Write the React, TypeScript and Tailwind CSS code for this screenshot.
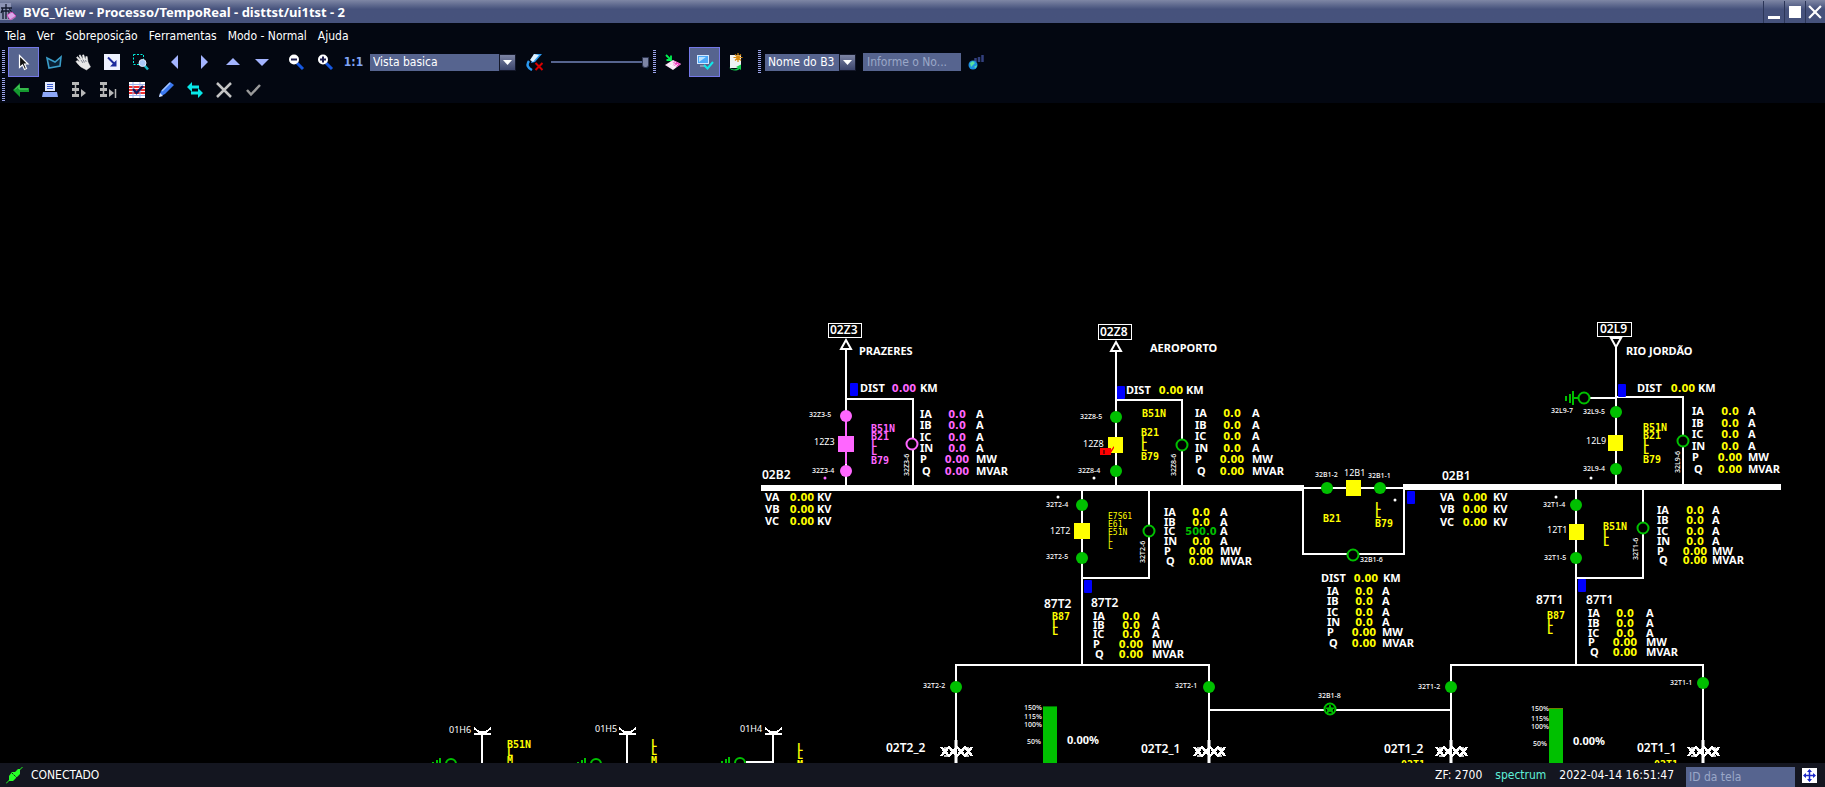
import React from "react";

const W = "#ffffff";
const G = "#00c000";
const Y = "#ffff00";
const P = "#ff66ff";
const B = "#0000ff";

/* ---------- diagram text ---------- */

type TProps = { x: number; y: number; c?: string; children: React.ReactNode };

const Label = ({ x, y, c = W, children }: TProps) => (
  <text x={x} y={y} fill={c} className="font-['Noto_Sans',sans-serif] text-[11px] font-bold">
    {children}
  </text>
);
const Value = ({ x, y, c = Y, children }: TProps) => (
  <text
    x={x}
    y={y}
    fill={c}
    textAnchor="middle"
    className="font-['DejaVu_Sans_Condensed','DejaVu_Sans',sans-serif] text-[11px] font-bold"
  >
    {children}
  </text>
);
const Tag = ({ x, y, c = W, children }: TProps) => (
  <text x={x} y={y} fill={c} className="font-['Noto_Sans',sans-serif] text-[12px] font-semibold">
    {children}
  </text>
);
const Relay = ({ x, y, c = Y, children }: TProps) => (
  <text x={x} y={y} fill={c} className="font-['DejaVu_Sans_Mono',monospace] text-[10px] font-bold">
    {children}
  </text>
);
const RelayThin = ({ x, y, c = Y, children }: TProps) => (
  <text x={x} y={y} fill={c} className="font-['DejaVu_Sans_Mono',monospace] text-[8px]">
    {children}
  </text>
);
const Small = ({ x, y, c = W, children }: TProps) => (
  <text x={x} y={y} fill={c} className="font-['Noto_Sans',sans-serif] text-[7px] font-medium">
    {children}
  </text>
);
const Mid = ({ x, y, c = W, children }: TProps) => (
  <text x={x} y={y} fill={c} className="font-['Noto_Sans',sans-serif] text-[9px]">
    {children}
  </text>
);
const Upright = ({ x, y, children }: TProps) => (
  <text
    transform={`translate(${x} ${y}) rotate(-90)`}
    fill={W}
    className="font-['Noto_Sans',sans-serif] text-[7px] font-medium"
  >
    {children}
  </text>
);

/* ---------- diagram symbols ---------- */

const Line = ({ d, c = W, w = 2 }: { d: string; c?: string; w?: number }) => (
  <path d={d} stroke={c} strokeWidth={w} fill="none" shapeRendering="crispEdges" />
);
const Dot = ({ x, y, c = G }: { x: number; y: number; c?: string }) => <circle cx={x} cy={y} r={6} fill={c} />;
const Open = ({ x, y, c = G }: { x: number; y: number; c?: string }) => (
  <circle cx={x} cy={y} r={5.5} fill="#000" stroke={c} strokeWidth={2} />
);
const Breaker = ({ x, y, c = Y, w = 15 }: { x: number; y: number; c?: string; w?: number }) => (
  <rect x={x} y={y} width={w} height={16} fill={c} />
);
const Flag = ({ x, y }: { x: number; y: number }) => <rect x={x} y={y} width={8} height={13} rx={1} fill={B} />;
const Point = ({ x, y, c = W }: { x: number; y: number; c?: string }) => <circle cx={x} cy={y} r={1.5} fill={c} />;

type Row = [name: string, y: number, value: string, color?: string];
const Readings = ({
  lx,
  vx,
  ux,
  c = Y,
  rows,
}: {
  lx: number;
  vx: number;
  ux: number;
  c?: string;
  rows: Row[];
}) => (
  <g>
    {rows.map(([name, y, value, color]) => (
      <g key={name}>
        <Label x={name === "Q" ? lx + 2 : lx} y={y}>
          {name}
        </Label>
        <Value x={vx} y={y} c={color ?? c}>
          {value}
        </Value>
        <Label x={ux} y={y}>
          {name === "P" ? "MW" : name === "Q" ? "MVAR" : "A"}
        </Label>
      </g>
    ))}
  </g>
);

const six = (ys: number[], ic?: [string, string]): Row[] => [
  ["IA", ys[0], "0.0"],
  ["IB", ys[1], "0.0"],
  ic ? ["IC", ys[2], ic[0], ic[1]] : ["IC", ys[2], "0.0"],
  ["IN", ys[3], "0.0"],
  ["P", ys[4], "0.00"],
  ["Q", ys[5], "0.00"],
];
const five = (ys: number[]): Row[] => [
  ["IA", ys[0], "0.0"],
  ["IB", ys[1], "0.0"],
  ["IC", ys[2], "0.0"],
  ["P", ys[3], "0.00"],
  ["Q", ys[4], "0.00"],
];

const Voltages = ({ x, vx, ux, ys }: { x: number; vx: number; ux: number; ys: number[] }) => (
  <g>
    {["VA", "VB", "VC"].map((n, i) => (
      <g key={n}>
        <Label x={x} y={ys[i]}>
          {n}
        </Label>
        <Value x={vx} y={ys[i]}>
          0.00
        </Value>
        <Label x={ux} y={ys[i]}>
          KV
        </Label>
      </g>
    ))}
  </g>
);

const Distance = ({ x, vx, ux, y, c = Y }: { x: number; vx: number; ux: number; y: number; c?: string }) => (
  <g>
    <Label x={x} y={y}>
      DIST
    </Label>
    <Value x={vx} y={y} c={c}>
      0.00
    </Value>
    <Label x={ux} y={y}>
      KM
    </Label>
  </g>
);

const Winding = ({ x }: { x: number }) => (
  <g>
    <path
      d={`M${x - 15} 747l8 9 8-9 8 9 7-9M${x - 15} 756l8-9 8 9 8-9 7 9`}
      stroke={W}
      strokeWidth={2.5}
      fill="none"
      shapeRendering="crispEdges"
    />
    <path d={`M${x - 12} 748h5l3 3M${x - 12} 756h5l3-3M${x + 13} 748h-4l-3 3M${x + 13} 756h-4l-3-3`} stroke={W} fill="none" strokeWidth={1.5} />
    <path d={`M${x} 740v8M${x} 755v8`} stroke={W} strokeWidth={3} />
  </g>
);

const Gauge = ({ x, y, top }: { x: number; y: number; top: string }) => (
  <g shapeRendering="crispEdges">
    <rect x={x} y={y} width={14} height={763 - y} fill={G} />
    <rect x={x} y={y} width={14} height={1} fill={top} />
  </g>
);

const Terminal = ({ x }: { x: number }) => (
  <g shapeRendering="crispEdges">
    <path d={`M${x - 8} 734h17`} stroke={W} strokeWidth={2} />
    <path d={`M${x - 8} 728l5 4h7l5-4`} stroke={W} strokeWidth={2} fill="none" />
    <path d={`M${x} 732v31`} stroke={W} strokeWidth={2} />
  </g>
);

const GroundArc = ({ x, y }: { x: number; y: number }) => (
  <g>
    <path d={`M${x - 11} ${y - 6}v12M${x - 14} ${y - 4}v8M${x - 18} ${y - 2}v5`} stroke={G} strokeWidth={2} />
    <circle cx={x} cy={y} r={5} fill="none" stroke={G} strokeWidth={2} />
  </g>
);

const Diagram = () => (
  <svg
    className="block h-full w-full"
    viewBox="0 103 1825 660"
    preserveAspectRatio="xMidYMax meet"
    role="img"
    aria-label="Diagrama unifilar"
  >
    {/* 02Z3 */}
    <rect x={828.5} y={323.5} width={33} height={14} fill="none" stroke={W} />
    <Tag x={830} y={334}>02Z3</Tag>
    <Line d="M846 349V485M846 399H913V485" />
    <Line d="M846 422V464" c={P} />
    <path d="M846 340l-5 9h10z" fill="#000" stroke={W} strokeWidth={2} />
    <Label x={859} y={355}>PRAZERES</Label>
    <Flag x={850} y={383} />
    <Distance x={860} vx={904} ux={920} y={392} c={P} />
    <Dot x={846} y={416} c={P} />
    <Breaker x={838} y={436} w={16} c={P} />
    <Dot x={846} y={471} c={P} />
    <Open x={912} y={444} c={P} />
    <Small x={809} y={417}>32Z3-5</Small>
    <Mid x={814} y={445}>12Z3</Mid>
    <Small x={812} y={473}>32Z3-4</Small>
    <Upright x={909} y={476}>32Z3-6</Upright>
    <Point x={825} y={478} c={P} />
    <Relay x={871} y={432} c={P}>B51N</Relay>
    <Relay x={871} y={440} c={P}>B21</Relay>
    <Relay x={871} y={447} c={P}>L</Relay>
    <Relay x={871} y={455} c={P}>L</Relay>
    <Relay x={871} y={464} c={P}>B79</Relay>
    <Readings lx={920} vx={957} ux={976} c={P} rows={six([418, 429, 441, 452, 463, 475])} />

    {/* 02Z8 */}
    <rect x={1098.5} y={324.5} width={33} height={15} fill="none" stroke={W} />
    <Tag x={1100} y={336}>02Z8</Tag>
    <Line d="M1116 351V485M1116 400H1182V485" />
    <path d="M1116 342l-5 9h10z" fill="#000" stroke={W} strokeWidth={2} />
    <Label x={1150} y={352}>AEROPORTO</Label>
    <Flag x={1117} y={386} />
    <Distance x={1126} vx={1171} ux={1186} y={394} />
    <Dot x={1116} y={417} />
    <Breaker x={1108} y={437} />
    <path d="M1100 448h11v2l3-4v2l-3 5v2h-11z" fill="#ff0000" />
    <path d="M1104 450v4" stroke="#000" />
    <Dot x={1116} y={471} />
    <Open x={1182} y={445} />
    <Small x={1080} y={419}>32Z8-5</Small>
    <Mid x={1083} y={447}>12Z8</Mid>
    <Small x={1078} y={473}>32Z8-4</Small>
    <Upright x={1176} y={476}>32Z8-6</Upright>
    <Point x={1094} y={478} />
    <Relay x={1142} y={417}>B51N</Relay>
    <Relay x={1141} y={436}>B21</Relay>
    <Relay x={1141} y={443}>L</Relay>
    <Relay x={1141} y={451}>L</Relay>
    <Relay x={1141} y={460}>B79</Relay>
    <Readings lx={1195} vx={1232} ux={1252} rows={six([417, 429, 440, 452, 463, 475])} />

    {/* 02L9 */}
    <rect x={1597.5} y={322.5} width={34} height={14} fill="none" stroke={W} />
    <Tag x={1600} y={333}>02L9</Tag>
    <Line d="M1616 347V484M1616 397H1683V484M1590 398H1616" />
    <path d="M1616 347l-5-9h10z" fill="#000" stroke={W} strokeWidth={2} />
    <Label x={1626} y={355}>RIO JORDÃO</Label>
    <Flag x={1618} y={384} />
    <Distance x={1637} vx={1683} ux={1698} y={392} />
    <Line d="M1573 398H1579M1573 391V405M1570 394V403M1566 396V401" c={G} />
    <Open x={1584} y={398} />
    <Small x={1551} y={413}>32L9-7</Small>
    <Small x={1583} y={414}>32L9-5</Small>
    <Mid x={1586} y={444}>12L9</Mid>
    <Small x={1583} y={471}>32L9-4</Small>
    <Upright x={1680} y={473}>32L9-6</Upright>
    <Dot x={1616} y={412} />
    <Breaker x={1608} y={435} />
    <Dot x={1616} y={469} />
    <Open x={1683} y={441} />
    <Point x={1591} y={478} />
    <Relay x={1643} y={431}>B51N</Relay>
    <Relay x={1643} y={439}>B21</Relay>
    <Relay x={1643} y={446}>L</Relay>
    <Relay x={1643} y={454}>L</Relay>
    <Relay x={1643} y={463}>B79</Relay>
    <Readings lx={1692} vx={1730} ux={1748} rows={six([415, 427, 438, 450, 461, 473])} />

    {/* bus bars */}
    <rect x={761} y={485} width={543} height={6} fill={W} />
    <rect x={1403} y={484} width={378} height={6} fill={W} />
    <Tag x={762} y={479}>02B2</Tag>
    <Voltages x={765} vx={802} ux={817} ys={[501, 513, 525]} />
    <Tag x={1442} y={480}>02B1</Tag>
    <Voltages x={1440} vx={1475} ux={1493} ys={[501, 513, 526]} />

    {/* bus tie */}
    <Line d="M1303 488H1404V554H1303V488" />
    <Dot x={1327} y={488} />
    <Breaker x={1346} y={480} />
    <Dot x={1380} y={488} />
    <Open x={1353} y={555} />
    <Small x={1315} y={477}>32B1-2</Small>
    <Mid x={1344} y={476}>12B1</Mid>
    <Small x={1368} y={478}>32B1-1</Small>
    <Small x={1360} y={562}>32B1-6</Small>
    <Point x={1395} y={500} />
    <Flag x={1407} y={491} />
    <Relay x={1323} y={522}>B21</Relay>
    <Relay x={1375} y={510}>L</Relay>
    <Relay x={1375} y={518}>L</Relay>
    <Relay x={1375} y={527}>B79</Relay>
    <Distance x={1321} vx={1366} ux={1383} y={582} />
    <Readings lx={1327} vx={1364} ux={1382} rows={six([595, 605, 616, 626, 636, 647])} />

    {/* 12T2 */}
    <Line d="M1082 491V665M1149 491V578H1082M956 763V665H1209V763M1209 710H1451" />
    <Point x={1058} y={497} />
    <Small x={1046} y={507}>32T2-4</Small>
    <Dot x={1082} y={505} />
    <Breaker x={1074} y={523} w={16} />
    <Mid x={1050} y={534}>12T2</Mid>
    <Dot x={1082} y={558} />
    <Small x={1046} y={559}>32T2-5</Small>
    <Open x={1149} y={531} />
    <Upright x={1145} y={563}>32T2-6</Upright>
    <RelayThin x={1108} y={519}>E7S61</RelayThin>
    <RelayThin x={1108} y={527}>E61</RelayThin>
    <RelayThin x={1108} y={535}>E51N</RelayThin>
    <RelayThin x={1108} y={542}>L</RelayThin>
    <RelayThin x={1108} y={549}>L</RelayThin>
    <Readings lx={1164} vx={1201} ux={1220} rows={six([516, 526, 535, 545, 555, 565], ["500.0", G])} />
    <Flag x={1084} y={580} />
    <Tag x={1044} y={608}>87T2</Tag>
    <Tag x={1091} y={607}>87T2</Tag>
    <Relay x={1052} y={620}>B87</Relay>
    <Relay x={1052} y={628}>L</Relay>
    <Relay x={1052} y={635}>L</Relay>
    <Readings lx={1093} vx={1131} ux={1152} rows={five([620, 629, 638, 648, 658])} />
    <Dot x={956} y={687} />
    <Dot x={1209} y={687} />
    <Small x={923} y={688}>32T2-2</Small>
    <Small x={1175} y={688}>32T2-1</Small>
    <Winding x={956} />
    <Winding x={1209} />
    <Tag x={886} y={752}>02T2_2</Tag>
    <Tag x={1141} y={753}>02T2_1</Tag>
    <Gauge x={1043} y={706} top="#007000" />
    <Small x={1024} y={710}>150%</Small>
    <Small x={1024} y={719}>115%</Small>
    <Small x={1024} y={727}>100%</Small>
    <Small x={1027} y={744}>50%</Small>
    <Label x={1067} y={744}>0.00%</Label>
    <Open x={1330} y={709} />
    <path d="M1330 705l1 3 3 0-2 2 1 3-3-2-3 2 1-3-2-2 3 0z" fill={G} stroke={G} />
    <Small x={1318} y={698}>32B1-8</Small>

    {/* 12T1 */}
    <Line d="M1576 490V665M1643 490V578H1576M1451 763V665H1703V763" />
    <Point x={1556} y={497} />
    <Small x={1543} y={507}>32T1-4</Small>
    <Dot x={1576} y={505} />
    <Breaker x={1569} y={524} />
    <Mid x={1547} y={533}>12T1</Mid>
    <Dot x={1576} y={558} />
    <Small x={1544} y={560}>32T1-5</Small>
    <Open x={1643} y={528} />
    <Upright x={1638} y={560}>32T1-6</Upright>
    <Relay x={1603} y={530}>B51N</Relay>
    <Relay x={1603} y={538}>L</Relay>
    <Relay x={1603} y={546}>L</Relay>
    <Readings lx={1657} vx={1695} ux={1712} rows={six([514, 524, 535, 545, 555, 564])} />
    <Flag x={1578} y={579} />
    <Tag x={1536} y={604}>87T1</Tag>
    <Tag x={1586} y={604}>87T1</Tag>
    <Relay x={1547} y={619}>B87</Relay>
    <Relay x={1547} y={626}>L</Relay>
    <Relay x={1547} y={634}>L</Relay>
    <Readings lx={1588} vx={1625} ux={1646} rows={five([617, 627, 637, 646, 656])} />
    <Dot x={1451} y={687} />
    <Dot x={1703} y={683} />
    <Small x={1418} y={689}>32T1-2</Small>
    <Small x={1670} y={685}>32T1-1</Small>
    <Winding x={1451} />
    <Winding x={1703} />
    <Tag x={1384} y={753}>02T1_2</Tag>
    <Tag x={1637} y={752}>02T1_1</Tag>
    <Relay x={1401} y={768}>02T1</Relay>
    <Relay x={1654} y={768}>02T1</Relay>
    <Gauge x={1549} y={708} top="#708000" />
    <Small x={1531} y={711}>150%</Small>
    <Small x={1531} y={721}>115%</Small>
    <Small x={1531} y={729}>100%</Small>
    <Small x={1533} y={746}>50%</Small>
    <Label x={1573} y={745}>0.00%</Label>

    {/* lower feeders */}
    <Terminal x={482} />
    <Mid x={449} y={733}>01H6</Mid>
    <Relay x={507} y={748}>B51N</Relay>
    <Relay x={507} y={756}>L</Relay>
    <Relay x={507} y={764}>M</Relay>
    <GroundArc x={451} y={764} />
    <Terminal x={627} />
    <Mid x={595} y={732}>01H5</Mid>
    <Relay x={651} y={747}>L</Relay>
    <Relay x={651} y={755}>L</Relay>
    <Relay x={651} y={764}>M</Relay>
    <GroundArc x={596} y={764} />
    <Terminal x={773} />
    <Mid x={740} y={732}>01H4</Mid>
    <Relay x={797} y={751}>L</Relay>
    <Relay x={797} y={759}>L</Relay>
    <Relay x={797} y={768}>M</Relay>
    <GroundArc x={740} y={763} />
    <Line d="M746 762H773" />
  </svg>
);

/* ---------- icons ---------- */

const Svg = ({ children, s = 18 }: { children: React.ReactNode; s?: number }) => (
  <svg width={s} height={s} viewBox="0 0 18 18" fill="none" aria-hidden="true">
    {children}
  </svg>
);

const icons = {
  cursor: (
    <Svg>
      <path d="M4.500 2.500v12l3-2.500 2 4.500 2-1-2-4.500h3.500z" fill="#111" stroke="#fff" strokeWidth="1.200" />
    </Svg>
  ),
  polygon: (
    <Svg>
      <path d="M2 5l8 4 6-5-1 9-11 2z" fill="#0a2034" stroke="#3a9cc8" strokeWidth="1.600" />
    </Svg>
  ),
  hand: (
    <Svg>
      <path
        d="M7 14C4.500 12 3 10 2 8.500l1-1 3 1.500L2.500 4.500l1-1L7 7 5 2.500l1.200-.7L9 6.500 8.500 2l1.300-.2L11.500 7l.3-3.500h1.400L14 9l2.500 5-4 3z"
        fill="#e8e8e8"
        stroke="#fff"
        strokeWidth=".4"
      />
      <path d="M7 7l2 3M9 6.500l1.500 3M11.500 7l.7 2" stroke="#555c70" strokeWidth=".7" />
    </Svg>
  ),
  boxArrow: (
    <Svg>
      <rect x="1" y="1" width="16" height="16" fill="#eef2ff" />
      <path d="M5 4.500l6 6" stroke="#1c2a9c" strokeWidth="2" />
      <path d="M13.500 7v6.500H7z" fill="#1c2a9c" />
    </Svg>
  ),
  zoomRegion: (
    <Svg>
      <rect x="1.500" y="1.500" width="10" height="10" stroke="#00f0e0" strokeDasharray="2 1.500" />
      <path d="M12.500 12.500l3.500 4" stroke="#19b8c8" strokeWidth="2.500" />
      <circle cx="10.500" cy="10" r="3.500" fill="#a9c8f8" stroke="#dfeaff" />
    </Svg>
  ),
  left: (
    <Svg>
      <path d="M11 2v14L4 9z" fill="#a3b4ff" />
    </Svg>
  ),
  right: (
    <Svg>
      <path d="M5 2v14l7-7z" fill="#a3b4ff" />
    </Svg>
  ),
  up: (
    <Svg>
      <path d="M1 12h14L8 5z" fill="#a3b4ff" />
    </Svg>
  ),
  down: (
    <Svg>
      <path d="M1 6h14l-7 7z" fill="#a3b4ff" />
    </Svg>
  ),
  zoomOut: (
    <Svg>
      <path d="M10 10l6 6" stroke="#1658e0" strokeWidth="3" />
      <circle cx="7" cy="6.500" r="5" fill="#fff" />
      <path d="M4 6.500h6" stroke="#1a1a4a" strokeWidth="2" />
    </Svg>
  ),
  zoomIn: (
    <Svg>
      <path d="M10 10l6 6" stroke="#1658e0" strokeWidth="3" />
      <circle cx="7" cy="6.500" r="5" fill="#fff" />
      <path d="M4 6.500h6M7 3.500v6" stroke="#1a1a4a" strokeWidth="2" />
    </Svg>
  ),
  brush: (
    <Svg>
      <path d="M8 1h8l-7 8-4 1z" fill="#2a98f0" />
      <path d="M8 1L4 7l3 2 6-7z" fill="#dff2ff" />
      <path d="M3 8c-3 4-1 7 3 9" stroke="#2a98f0" strokeWidth="2.500" />
      <path d="M9.500 10l7 7M16.500 10l-7 7" stroke="#d80000" strokeWidth="2" />
    </Svg>
  ),
  layer: (
    <Svg>
      <path d="M1 12l8-5 8 4-8 6z" fill="#f8e0f4" />
      <path d="M11 8l6 3-4 3-5-3z" fill="#f040c0" />
      <path d="M4 11l7 4M6 9l7 4M5 14l7-5M8 16l6-5" stroke="#fff" strokeWidth=".8" />
      <path d="M2 2l5 5M7 2.500V7H2.500" stroke="#00f050" strokeWidth="1.800" />
    </Svg>
  ),
  monitor: (
    <Svg>
      <rect x="1.500" y="2.500" width="11" height="8" fill="#4aa8f8" stroke="#cfe6ff" />
      <path d="M3 4h7l-7 5z" fill="#b8e2ff" />
      <path d="M4 13h5" stroke="#9ab" strokeWidth="1.500" />
      <path d="M8 12l3.500 3.500L17 9" stroke="#10e8e8" strokeWidth="2" />
    </Svg>
  ),
  page: (
    <Svg>
      <path d="M4 2h11v13H4z" fill="#f0f2f4" />
      <path d="M12 0v9M7.500 4.500h9M9 1.500l6 6M15 1.500l-6 6" stroke="#d88a10" strokeWidth="1.200" />
      <path d="M3 14c2 3 7 3 9 1l-2-1 5-2.500v5.500l-1.500-1c-3 2.500-9 2-10.500-2z" fill="#18d050" />
    </Svg>
  ),
  globe: (
    <Svg>
      <path d="M8.500 5v4M12 4v5M15.500 2v7" stroke="#33407e" strokeWidth="2.500" />
      <circle cx="6" cy="12" r="4.500" fill="#1c90e0" />
      <path d="M3 10l3-2 2 2-2 2-2 2zM7 14l3-2-1 3z" fill="#58e0a0" />
    </Svg>
  ),
  back: (
    <Svg>
      <path d="M1 9l7-7v5h9v4H8v5z" fill="#14982f" />
      <path d="M3 8.500l4-4v3.500h9" stroke="#58d868" />
    </Svg>
  ),
  printer: (
    <Svg>
      <path d="M4 1h10v9H4z" fill="#e4ebff" />
      <path d="M6 3.500h6M6 5.500h6M6 7.500h6" stroke="#3858d0" />
      <path d="M2 11h14l1 5H1z" fill="#8ea8f8" />
    </Svg>
  ),
  tree: (
    <Svg>
      <path d="M2 2.500h7M2 8.500h7M2 14.500h7" stroke="#b8b8b8" strokeWidth="3" />
      <path d="M5.500 2v13" stroke="#b8b8b8" strokeWidth="1.500" />
      <path d="M11 8l5 4-5 4z" fill="#b8b8b8" />
    </Svg>
  ),
  treeEnd: (
    <Svg>
      <path d="M1 2.500h7M1 8.500h7M1 14.500h7" stroke="#b8b8b8" strokeWidth="3" />
      <path d="M4.500 2v13M16.500 8v9" stroke="#b8b8b8" strokeWidth="1.500" />
      <path d="M10 8l5 4-5 4z" fill="#b8b8b8" />
    </Svg>
  ),
  table: (
    <Svg>
      <rect x="1" y="1" width="16" height="16" fill="#fff" />
      <path d="M1 6h16M1 9h16M1 12h16" stroke="#f03030" strokeWidth="2" />
      <path d="M1 3.500h16M1 14.500h16M5 1v16M12 1v16" stroke="#9cb4f0" />
      <path d="M5 8l3.500 4L15 5" stroke="#101860" strokeWidth="2.500" />
    </Svg>
  ),
  pen: (
    <Svg>
      <path d="M2 16l2-6 9-9 4 3-9 9z" fill="#3a78f0" />
      <path d="M5 10l8-8" stroke="#a8c8ff" strokeWidth="1.500" />
      <path d="M2 16l1-4 3 3z" fill="#d8e4ff" />
    </Svg>
  ),
  swap: (
    <Svg>
      <path d="M1 6l5-5v3.500h7v3H6V11zM17 12l-5-5v3.500H5v3h7V17z" fill="#08e8e8" />
    </Svg>
  ),
  close: (
    <Svg>
      <path d="M2 2l14 14M16 2L2 16" stroke="#c4c4c4" strokeWidth="2.500" />
    </Svg>
  ),
  check: (
    <Svg>
      <path d="M3 9l4 4.500L16 4" stroke="#9a9a9a" strokeWidth="2.500" />
    </Svg>
  ),
};

const ToolButton = ({ icon, label }: { icon: React.ReactNode; label: string }) => (
  <button type="button" aria-label={label} className="flex h-[29px] w-[29px] shrink-0 items-center justify-center">
    {icon}
  </button>
);
const ActiveButton = ({ icon, label }: { icon: React.ReactNode; label: string }) => (
  <button
    type="button"
    aria-label={label}
    aria-pressed="true"
    className="flex h-[30px] w-[31px] shrink-0 items-center justify-center border border-[#7478e8] bg-[#56648f]"
  >
    {icon}
  </button>
);
const Grip = () => (
  <span className="h-6 w-[3px] shrink-0 bg-[repeating-linear-gradient(to_bottom,#9aa2e8_0px,#9aa2e8_1px,transparent_1px,transparent_2px)]" />
);

const Drop = ({ label, value, className }: { label: string; value: string; className: string }) => (
  <div className={`grid h-[17px] shrink-0 ${className}`}>
    <select
      aria-label={label}
      className="col-start-1 row-start-1 h-[17px] w-full appearance-none bg-[#56648f] pl-[3px] text-xs leading-[17px] text-white outline-none"
    >
      <option>{value}</option>
    </select>
    <span className="pointer-events-none col-start-1 row-start-1 flex h-[17px] w-[17px] items-center justify-center justify-self-end border border-[#14182a] bg-linear-to-b from-[#7c84a4] to-[#3c456c]">
      <svg width="9" height="5" viewBox="0 0 9 5" aria-hidden="true">
        <path d="M0 0h9L4.500 5z" fill="#fff" />
      </svg>
    </span>
  </div>
);

const menus = ["Tela", "Ver", "Sobreposição", "Ferramentas", "Modo - Normal", "Ajuda"];

export default function App() {
  return (
    <div className="flex h-screen flex-col overflow-hidden bg-black font-['DejaVu_Sans_Condensed','DejaVu_Sans',sans-serif] text-xs text-white">
      <header className="flex h-[23px] shrink-0 items-center bg-linear-to-b from-[#7f87a5] to-[#46527c] to-40%">
        <svg width="17" height="18" viewBox="0 0 17 18" aria-hidden="true">
          <path d="M0 0h11v10l5 4-4 3H0z" fill="#8c93b4" />
          <path d="M6 1v15M1 5h11M3 5l-2 5M9 5l3 5M3 16V8h6v8" stroke="#12182c" strokeWidth="1.300" fill="none" />
          <path d="M7 12l5-3 4 4-6 4z" fill="#d8a8e8" stroke="#e030b0" strokeWidth=".7" />
        </svg>
        <h1 className="ml-[6px] font-['Noto_Sans',sans-serif] text-[13px] leading-5 font-bold">
          BVG_View - Processo/TempoReal - disttst/ui1tst - 2
        </h1>
        <div className="ml-auto flex items-center pr-px">
          <button
            type="button"
            aria-label="Minimizar"
            className="flex h-[22px] w-[21px] items-end justify-center border-l border-[#2c3658]"
          >
            <span className="mb-1 h-[3px] w-3 bg-white" />
          </button>
          <button
            type="button"
            aria-label="Maximizar"
            className="flex h-[22px] w-[21px] items-center justify-center border-l border-[#2c3658]"
          >
            <span className="size-3 bg-white" />
          </button>
          <button
            type="button"
            aria-label="Fechar"
            className="flex h-[22px] w-[19px] items-center justify-center border-l border-[#2c3658]"
          >
            <svg width="14" height="14" viewBox="0 0 13 13" aria-hidden="true">
              <path d="M1 1l11 11M12 1L1 12" stroke="#fff" strokeWidth="2" />
            </svg>
          </button>
        </div>
      </header>

      <nav className="flex h-6 shrink-0 items-end gap-[11px] bg-[#030711] pl-[5px]">
        {menus.map((m) => (
          <button key={m} type="button" className="leading-[22px]">
            {m}
          </button>
        ))}
      </nav>

      <div className="flex h-[30px] shrink-0 items-center bg-[#030711] pl-[2px]">
        <Grip />
        <div className="ml-[3px] flex items-center">
          <ActiveButton icon={icons.cursor} label="Selecionar" />
          <ToolButton icon={icons.polygon} label="Polígono" />
          <ToolButton icon={icons.hand} label="Mover" />
          <ToolButton icon={icons.boxArrow} label="Navegar" />
          <ToolButton icon={icons.zoomRegion} label="Zoom de área" />
        </div>
        <div className="ml-[6px] flex items-center">
          <ToolButton icon={icons.left} label="Esquerda" />
          <ToolButton icon={icons.right} label="Direita" />
          <ToolButton icon={icons.up} label="Acima" />
          <ToolButton icon={icons.down} label="Abaixo" />
        </div>
        <div className="ml-1 flex items-center">
          <ToolButton icon={icons.zoomOut} label="Reduzir" />
          <ToolButton icon={icons.zoomIn} label="Ampliar" />
          <button type="button" className="h-[29px] w-[29px] text-xs font-bold text-[#7fa4f4]">
            1:1
          </button>
        </div>
        <Drop label="Vista" value="Vista basica" className="ml-[2px] w-[146px]" />
        <div className="ml-1 flex items-center">
          <ToolButton icon={icons.brush} label="Limpar" />
          <input
            type="range"
            aria-label="Nível"
            defaultValue={100}
            className="ml-[2px] h-4 w-[98px] appearance-none bg-[linear-gradient(#56648f,#56648f)] bg-[length:100%_2px] bg-center bg-no-repeat [&::-webkit-slider-thumb]:h-[11px] [&::-webkit-slider-thumb]:w-[7px] [&::-webkit-slider-thumb]:appearance-none [&::-webkit-slider-thumb]:rounded-b-[3px] [&::-webkit-slider-thumb]:border [&::-webkit-slider-thumb]:border-[#2c3450] [&::-webkit-slider-thumb]:bg-[#7c84a4]"
          />
        </div>
        <div className="ml-1 flex items-center">
          <Grip />
          <span className="w-[2px]" />
          <ToolButton icon={icons.layer} label="Camadas" />
        </div>
        <div className="ml-[2px] flex items-center">
          <ActiveButton icon={icons.monitor} label="Monitorar" />
          <ToolButton icon={icons.page} label="Nova página" />
        </div>
        <div className="ml-[9px] flex items-center">
          <Grip />
          <Drop label="Nome" value="Nome do B3" className="ml-1 w-[91px]" />
          <input
            type="text"
            aria-label="Informe o Nome"
            placeholder="Informe o No..."
            className="ml-[7px] h-[18px] w-[98px] bg-[#56648f] pl-1 text-xs text-white outline-none placeholder:text-[#9ba8c8]"
          />
          <ToolButton icon={icons.globe} label="Localizar" />
        </div>
      </div>

      <div className="flex h-[26px] shrink-0 items-center bg-[#030711] pl-[2px]">
        <Grip />
        <div className="ml-px flex items-center">
          <ToolButton icon={icons.back} label="Voltar" />
          <ToolButton icon={icons.printer} label="Imprimir" />
          <ToolButton icon={icons.tree} label="Passo" />
          <ToolButton icon={icons.treeEnd} label="Último passo" />
          <ToolButton icon={icons.table} label="Tabela" />
          <ToolButton icon={icons.pen} label="Editar" />
          <ToolButton icon={icons.swap} label="Trocar" />
          <ToolButton icon={icons.close} label="Cancelar" />
          <ToolButton icon={icons.check} label="Confirmar" />
        </div>
      </div>

      <main className="min-h-0 flex-1 overflow-hidden bg-black">
        <Diagram />
      </main>

      <footer className="flex h-6 shrink-0 items-center bg-[#141620]">
        <svg className="ml-[6px]" width="17" height="17" viewBox="0 0 17 17" aria-hidden="true">
          <path d="M0 16.500L16.500 0" stroke="#20ff20" />
          <path d="M3 9l3-4 3 0 3-3 2 0 0 5-3 3-1 1-3 3H3z" fill="#28ff28" />
          <path d="M6 6l5 5" stroke="#141620" strokeDasharray="2 1" />
        </svg>
        <span className="ml-2">CONECTADO</span>
        <span className="ml-auto">ZF: 2700</span>
        <span className="ml-[13px] text-[#5ff0d8]">spectrum</span>
        <span className="ml-[13px]">2022-04-14 16:51:47</span>
        <input
          type="text"
          aria-label="ID da tela"
          placeholder="ID da tela"
          className="ml-3 h-5 w-[109px] self-end bg-[#56648f] pl-[3px] text-xs text-white outline-none placeholder:text-[#9ba8c8]"
        />
        <button
          type="button"
          aria-label="Mover tela"
          className="mr-2 ml-[7px] flex size-[15px] items-center justify-center bg-white"
        >
          <svg width="13" height="13" viewBox="0 0 13 13" aria-hidden="true">
            <path d="M6.500 1v11M1 6.500h11" stroke="#1c28c8" strokeWidth="1.500" />
            <path d="M6.500 0l2.500 3H4zM6.500 13l2.500-3H4zM0 6.500l3-2.500v5zM13 6.500L10 4v5z" fill="#1c28c8" />
          </svg>
        </button>
      </footer>
    </div>
  );
}
